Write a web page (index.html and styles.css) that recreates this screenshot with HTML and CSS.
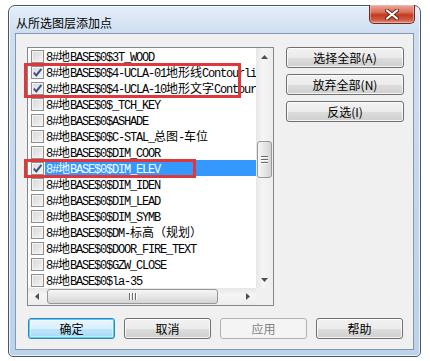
FILE: index.html
```html
<!DOCTYPE html>
<html lang="zh-CN">
<head>
    <meta charset="UTF-8">
    <title>从所选图层添加点</title>
    <link rel="stylesheet" href="styles.css">
</head>
<body>
    <div class="window">
        <div class="titlebar">
            <div class="title">从所选图层添加点</div>
        </div>
        <div class="close-btn">
            <svg width="14" height="11" viewBox="0 0 14 11">
                <path d="M2 1.5 L12 9.5 M12 1.5 L2 9.5" stroke="#5a2418" stroke-width="4" stroke-linecap="round"/>
                <path d="M2 1.5 L12 9.5 M12 1.5 L2 9.5" stroke="#fff" stroke-width="2.2" stroke-linecap="round"/>
            </svg>
        </div>

        <div class="client">
            <div class="main">
                <div class="listbox">
                    <div class="rows" id="rows"></div>
                    <div class="vscroll">
                        <div class="arrow">
                            <svg width="7" height="4" viewBox="0 0 7 4"><polygon points="0,4 3.5,0 7,4" fill="#505050"/></svg>
                        </div>
                        <div class="vthumb">
                            <span></span><span></span><span></span>
                        </div>
                        <div class="arrow end">
                            <svg width="7" height="4" viewBox="0 0 7 4"><polygon points="0,0 3.5,4 7,0" fill="#505050"/></svg>
                        </div>
                    </div>
                    <div class="hscroll">
                        <div class="arrow">
                            <svg width="4" height="7" viewBox="0 0 4 7"><polygon points="4,0 0,3.5 4,7" fill="#505050"/></svg>
                        </div>
                        <div class="hthumb">
                            <span></span><span></span><span></span>
                        </div>
                        <div class="arrow end">
                            <svg width="4" height="7" viewBox="0 0 4 7"><polygon points="0,0 4,3.5 0,7" fill="#505050"/></svg>
                        </div>
                    </div>
                    <div class="corner"></div>
                </div>

                <div class="side">
                    <button class="btn">选择全部(A)</button>
                    <button class="btn">放弃全部(N)</button>
                    <button class="btn">反选(I)</button>
                </div>
            </div>

            <div class="bottom">
                <button class="btn wide default">确定</button>
                <button class="btn wide">取消</button>
                <button class="btn wide disabled">应用</button>
                <button class="btn wide">帮助</button>
            </div>

            <!-- red annotation boxes -->
            <div class="mark mark-a"></div>
            <div class="mark mark-b"></div>
        </div>
    </div>

    <script>
        // layer rows: [text, checked, selected]
        const layers = [
            ["8#<c>地</c>BASE$0$3T_WOOD", false, false],
            ["8#<c>地</c>BASE$0$4-UCLA-01<c>地形线</c>Contourline", true, false],
            ["8#<c>地</c>BASE$0$4-UCLA-10<c>地形文字</c>Contour'", true, false],
            ["8#<c>地</c>BASE$0$_TCH_KEY", false, false],
            ["8#<c>地</c>BASE$0$ASHADE", false, false],
            ["8#<c>地</c>BASE$0$C-STAL_<c>总图</c>-<c>车位</c>", false, false],
            ["8#<c>地</c>BASE$0$DIM_COOR", false, false],
            ["8#<c>地</c>BASE$0$DIM_ELEV", true, true],
            ["8#<c>地</c>BASE$0$DIM_IDEN", false, false],
            ["8#<c>地</c>BASE$0$DIM_LEAD", false, false],
            ["8#<c>地</c>BASE$0$DIM_SYMB", false, false],
            ["8#<c>地</c>BASE$0$DM-<c>标高（规划）</c>", false, false],
            ["8#<c>地</c>BASE$0$DOOR_FIRE_TEXT", false, false],
            ["8#<c>地</c>BASE$0$GZW_CLOSE", false, false],
            ["8#<c>地</c>BASE$0$la-35", false, false]
        ];

        const tick = '<svg width="11" height="11" viewBox="0 0 11 11"><path d="M1.8 5.6 L4.3 8.4 L9.4 1.8" fill="none" stroke="#3a4f8c" stroke-width="1.9"/></svg>';

        const rows = document.getElementById("rows");
        layers.forEach(([text, checked, selected]) => {
            const row = document.createElement("div");
            row.className = "row" + (selected ? " selected" : "");
            row.innerHTML = `
                <span class="check">${checked ? tick : ""}</span>
                <span class="label">${text.replace(/<c>/g, '<span class="cjk">').replace(/<\/c>/g, '</span>')}</span>
            `;
            rows.appendChild(row);
        });
    </script>
</body>
</html>
```

FILE: styles.css
```css
/* General */
* {
    box-sizing: border-box;
}

body {
    margin: 0;
    background: #fff;
    font-family: "Noto Sans CJK SC", "Noto Sans", sans-serif;
}

/* Window frame */
.window {
    position: relative;
    width: 413px;
    height: 352px;
    margin: 5px 0 0 8px;
    border: 1px solid #47576b;
    border-radius: 7px 7px 5px 5px;
    background: linear-gradient(180deg, #e4eef9 0, #cfdff1 26px, #c1d6ec 60%, #bdd3ea 100%);
    box-shadow: inset 0 0 0 1px rgba(255, 255, 255, 0.7);
    padding: 0 6px 6px;
    display: flex;
    flex-direction: column;
}

.titlebar {
    height: 27px;
    flex: none;
}

.title {
    padding: 10px 0 0 1px;
    font-size: 12px;
    line-height: 14px;
    color: #000;
}

.close-btn {
    position: absolute;
    top: -1px;
    right: 5px;
    width: 46px;
    height: 19px;
    border: 1px solid #6a2b22;
    border-top: none;
    border-radius: 0 0 5px 5px;
    background: linear-gradient(180deg, #eaa99a 0, #d8705b 40%, #c4391f 55%, #d06048 85%, #e09a84 100%);
    box-shadow: inset 0 0 0 1px rgba(255, 200, 190, 0.5);
    display: flex;
    align-items: center;
    justify-content: center;
}

/* Client area */
.client {
    position: relative;
    flex: 1;
    border: 1px solid #8499b0;
    background: #f0f0f0;
    padding: 13px 0 0 11px;
}

.main {
    display: flex;
    gap: 12px;
}

/* List box */
.listbox {
    width: 247px;
    height: 259px;
    border: 1px solid #828790;
    background: #fff;
    display: grid;
    grid-template-columns: 228px 17px;
    grid-template-rows: 240px 17px;
}

.rows {
    overflow: hidden;
}

.row {
    height: 16px;
    display: flex;
    align-items: center;
    padding-left: 3px;
}

.check {
    width: 13px;
    height: 13px;
    flex: none;
    border: 1px solid #8f8f8f;
    background: linear-gradient(135deg, #d6d6d6, #f6f6f6);
    box-shadow: inset 0 0 0 1px #f4f4f4;
    display: flex;
    align-items: center;
    justify-content: center;
}

.label {
    flex: 1;
    height: 16px;
    margin-left: 1px;
    padding-left: 1px;
    font-family: "Liberation Mono", "Noto Sans CJK SC", monospace;
    font-size: 12px;
    line-height: 16px;
    letter-spacing: -1.2px;
    white-space: nowrap;
    overflow: hidden;
    color: #000;
}

.label .cjk {
    font-family: "Noto Sans CJK SC", sans-serif;
    letter-spacing: 0;
}

.row.selected .label {
    background: #3399ff;
    color: #fff;
}

/* Scrollbars */
.vscroll {
    background: linear-gradient(90deg, #e6e6e6, #f5f5f5 40%, #ededed);
    display: flex;
    flex-direction: column;
}

.hscroll {
    background: linear-gradient(180deg, #e6e6e6, #f5f5f5 40%, #ededed);
    display: flex;
}

.arrow {
    width: 17px;
    height: 17px;
    flex: none;
    display: flex;
    align-items: center;
    justify-content: center;
}

.arrow.end {
    margin-top: auto;
}

.hscroll .arrow.end {
    margin-top: 0;
    margin-left: auto;
}

.vthumb {
    width: 15px;
    height: 37px;
    margin: 76px 0 0 1px;
    border: 1px solid #979797;
    border-radius: 3px;
    background: linear-gradient(90deg, #f6f6f6, #e6e6e6 50%, #d4d4d4);
    display: flex;
    flex-direction: column;
    align-items: center;
    justify-content: center;
    gap: 2px;
}

.vthumb span {
    width: 7px;
    height: 1px;
    background: #6a6a6a;
    box-shadow: 0 1px 0 #fff;
}

.hthumb {
    width: 171px;
    height: 15px;
    margin: 1px 0 0 2px;
    border: 1px solid #979797;
    border-radius: 3px;
    background: linear-gradient(180deg, #f6f6f6, #e6e6e6 50%, #d4d4d4);
    display: flex;
    align-items: center;
    justify-content: center;
    gap: 2px;
}

.hthumb span {
    width: 1px;
    height: 7px;
    background: #6a6a6a;
    box-shadow: 1px 0 0 #fff;
}

.corner {
    background: #f0f0f0;
}

/* Buttons */
.side {
    width: 118px;
    display: flex;
    flex-direction: column;
    gap: 6px;
}

.btn {
    height: 21px;
    padding: 0;
    border: 1px solid #707070;
    border-radius: 3px;
    background: linear-gradient(180deg, #f2f2f2 0, #ebebeb 50%, #dddddd 51%, #cfcfcf 100%);
    box-shadow: inset 0 0 0 1px rgba(255, 255, 255, 0.75);
    font-family: "Noto Sans CJK SC", sans-serif;
    font-size: 12px;
    line-height: 19px;
    color: #000;
}

.bottom {
    display: flex;
    gap: 9px;
    margin-top: 12px;
    padding-left: 1px;
}

.btn.wide {
    width: 87px;
}

.btn.default {
    border-color: #3c7fb1;
    background: linear-gradient(180deg, #eaf6fd 0, #d9f0fc 50%, #bee6fd 51%, #a7d9f5 100%);
    box-shadow: inset 0 0 0 1px #48d6fb, inset 0 0 0 2px rgba(255, 255, 255, 0.4);
}

.btn.disabled {
    border-color: #adb2b5;
    background: #f4f4f4;
    box-shadow: none;
    color: #838383;
}

/* Red annotation boxes */
.mark {
    position: absolute;
    border: 3px solid #e0383a;
    pointer-events: none;
}

.mark-a {
    left: 8px;
    top: 29px;
    width: 217px;
    height: 35px;
}

.mark-b {
    left: 8px;
    top: 125px;
    width: 172px;
    height: 19px;
}
```
